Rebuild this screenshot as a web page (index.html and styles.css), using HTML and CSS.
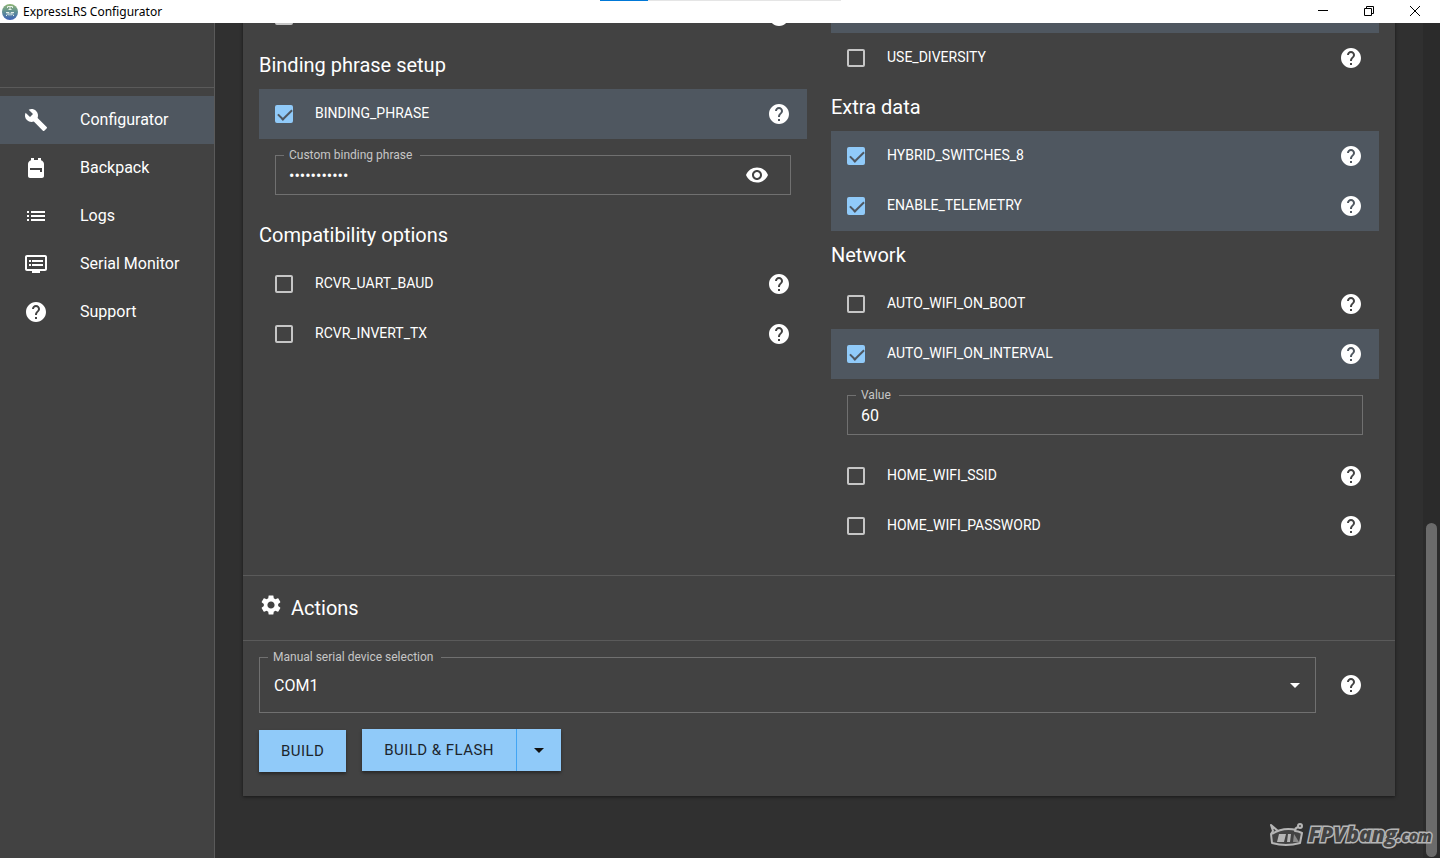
FILE: index.html
```html
<!DOCTYPE html>
<html lang="en">
<head>
  <meta charset="UTF-8" />
  <meta name="viewport" content="width=device-width, initial-scale=1.0"/>
  <title>ExpressLRS Configurator</title>
  <link rel="stylesheet" href="styles.css">
</head>
<body>
  <!-- shared icons -->
  <svg class="sprite" aria-hidden="true">
    <symbol id="help" viewBox="0 0 24 24"><path d="M12 2C6.480 2 2 6.480 2 12s4.480 10 10 10 10-4.480 10-10S17.520 2 12 2zm1 17h-2v-2h2v2zm2.070-7.750l-.9.920C13.450 12.900 13 13.500 13 15h-2v-.5c0-1.100.45-2.100 1.170-2.830l1.240-1.260c.37-.36.59-.86.59-1.410 0-1.100-.9-2-2-2s-2 .9-2 2H8c0-2.210 1.790-4 4-4s4 1.790 4 4c0 .88-.36 1.680-.93 2.250z"/></symbol>
    <symbol id="arrow" viewBox="0 0 24 24"><path d="M7 10l5 5 5-5z"/></symbol>
  </svg>

  <header class="titlebar">
    <svg class="app-icon" viewBox="0 0 16 16">
      <defs>
        <linearGradient id="logo" x1="0" y1="0" x2="0" y2="1">
          <stop offset="0" stop-color="#8fb573"/>
          <stop offset=".5" stop-color="#5f8f95"/>
          <stop offset="1" stop-color="#3f62b8"/>
        </linearGradient>
      </defs>
      <circle cx="8" cy="8" r="8" fill="url(#logo)"/>
      <path d="M5.500 4V2.500h5V4M8 2.500V5M6.500 5.500h3M4 8.500h3v3M4.500 10h2M4 11.500h1M12 8.500H9v3M11.500 10h-2M12 11.500h-1" fill="none" stroke="#e6efea" stroke-width="1"/>
    </svg>
    <span class="app-title">ExpressLRS Configurator</span>
    <div class="progress"></div>
    <div class="window-buttons">
      <button aria-label="Minimize"><svg viewBox="0 0 12 12"><path d="M1 5.500h10"/></svg></button>
      <button aria-label="Restore"><svg viewBox="0 0 12 12"><path d="M1.500 3.500h7v7h-7zM3.500 3.500v-2h7v7h-2"/></svg></button>
      <button aria-label="Close"><svg viewBox="0 0 12 12"><path d="M1 1l10 10M11 1L1 11"/></svg></button>
    </div>
  </header>

  <div class="app">
    <nav class="sidebar">
      <div class="sidebar-top"></div>
      <ul>
        <li><a class="active" href="#configurator">
          <svg viewBox="0 0 24 24"><path d="M22.700 19l-9.100-9.100c.9-2.300.4-5-1.500-6.900-2-2-5-2.400-7.400-1.300L9 6 6 9 1.600 4.700C.4 7.100.9 10.100 2.900 12.100c1.900 1.900 4.600 2.400 6.900 1.500l9.100 9.100c.4.4 1 .4 1.400 0l2.300-2.300c.5-.4.5-1.100.1-1.400z"/></svg>
          Configurator</a></li>
        <li><a href="#backpack">
          <svg viewBox="0 0 24 24"><path d="M20 8v12c0 1.100-.9 2-2 2H6c-1.100 0-2-.9-2-2V8c0-1.860 1.280-3.410 3-3.860V2h3v2h4V2h3v2.140c1.720.45 3 2 3 3.860zM6 12v2h10v2h2v-4H6z"/></svg>
          Backpack</a></li>
        <li><a href="#logs">
          <svg viewBox="0 0 24 24"><path d="M3 13h2v-2H3v2zm0 4h2v-2H3v2zm0-8h2V7H3v2zm4 4h14v-2H7v2zm0 4h14v-2H7v2zM7 7v2h14V7H7z"/></svg>
          Logs</a></li>
        <li><a href="#serial">
          <svg viewBox="0 0 24 24"><path d="M21 3H3c-1.100 0-2 .9-2 2v12c0 1.100.9 2 2 2h5v2h8v-2h5c1.100 0 1.990-.9 1.990-2L23 5c0-1.100-.9-2-2-2zm0 14H3V5h18v12zm-2-9H8v2h11V8zm0 4H8v2h11v-2zM7 8H5v2h2V8zm0 4H5v2h2v-2z"/></svg>
          Serial Monitor</a></li>
        <li><a href="#support">
          <svg><use href="#help"/></svg>
          Support</a></li>
      </ul>
    </nav>

    <main class="content">
      <div class="card">
        <div class="options">
          <section class="column column-left">
            <div class="option">
              <input type="checkbox" aria-label="Regulatory domain">
              <button class="help" aria-label="Help"><svg><use href="#help"/></svg></button>
            </div>
            <h2>Binding phrase setup</h2>
            <div class="option selected">
              <input type="checkbox" id="binding" checked>
              <label for="binding">BINDING_PHRASE</label>
              <button class="help" aria-label="Help"><svg><use href="#help"/></svg></button>
            </div>
            <div class="field">
              <label for="phrase">Custom binding phrase</label>
              <input type="password" id="phrase" value="expresslrs1">
              <button class="eye" aria-label="Show phrase"><svg viewBox="0 0 24 24"><path d="M12 4.500C7 4.500 2.730 7.610 1 12c1.730 4.390 6 7.500 11 7.500s9.270-3.110 11-7.500c-1.730-4.390-6-7.500-11-7.500zM12 17c-2.760 0-5-2.240-5-5s2.240-5 5-5 5 2.240 5 5-2.240 5-5 5zm0-8c-1.660 0-3 1.340-3 3s1.340 3 3 3 3-1.340 3-3-1.340-3-3-3z"/></svg></button>
            </div>
            <h2>Compatibility options</h2>
            <div class="option">
              <input type="checkbox" id="baud">
              <label for="baud">RCVR_UART_BAUD</label>
              <button class="help" aria-label="Help"><svg><use href="#help"/></svg></button>
            </div>
            <div class="option">
              <input type="checkbox" id="invert">
              <label for="invert">RCVR_INVERT_TX</label>
              <button class="help" aria-label="Help"><svg><use href="#help"/></svg></button>
            </div>
          </section>

          <section class="column">
            <div class="option selected">
              <input type="checkbox" aria-label="Lock on first connection" checked>
              <button class="help" aria-label="Help"><svg><use href="#help"/></svg></button>
            </div>
            <div class="option">
              <input type="checkbox" id="diversity">
              <label for="diversity">USE_DIVERSITY</label>
              <button class="help" aria-label="Help"><svg><use href="#help"/></svg></button>
            </div>
            <h2>Extra data</h2>
            <div class="option selected">
              <input type="checkbox" id="hybrid" checked>
              <label for="hybrid">HYBRID_SWITCHES_8</label>
              <button class="help" aria-label="Help"><svg><use href="#help"/></svg></button>
            </div>
            <div class="option selected">
              <input type="checkbox" id="telemetry" checked>
              <label for="telemetry">ENABLE_TELEMETRY</label>
              <button class="help" aria-label="Help"><svg><use href="#help"/></svg></button>
            </div>
            <h2>Network</h2>
            <div class="option">
              <input type="checkbox" id="onboot">
              <label for="onboot">AUTO_WIFI_ON_BOOT</label>
              <button class="help" aria-label="Help"><svg><use href="#help"/></svg></button>
            </div>
            <div class="option selected">
              <input type="checkbox" id="oninterval" checked>
              <label for="oninterval">AUTO_WIFI_ON_INTERVAL</label>
              <button class="help" aria-label="Help"><svg><use href="#help"/></svg></button>
            </div>
            <div class="field">
              <label for="interval">Value</label>
              <input type="text" id="interval" value="60">
            </div>
            <div class="option">
              <input type="checkbox" id="ssid">
              <label for="ssid">HOME_WIFI_SSID</label>
              <button class="help" aria-label="Help"><svg><use href="#help"/></svg></button>
            </div>
            <div class="option">
              <input type="checkbox" id="password">
              <label for="password">HOME_WIFI_PASSWORD</label>
              <button class="help" aria-label="Help"><svg><use href="#help"/></svg></button>
            </div>
          </section>
        </div>

        <div class="card-title">
          <svg viewBox="0 0 24 24"><path d="M19.140 12.940c.04-.3.060-.61.060-.94 0-.32-.02-.64-.07-.94l2.030-1.580c.18-.14.23-.41.12-.61l-1.920-3.320c-.12-.22-.37-.29-.59-.22l-2.390.96c-.5-.38-1.030-.7-1.620-.94l-.36-2.540c-.04-.24-.24-.41-.48-.41h-3.840c-.24 0-.43.17-.47.41l-.36 2.540c-.59.24-1.130.57-1.620.94l-2.390-.96c-.22-.08-.47 0-.59.22L2.740 8.870c-.12.21-.08.47.12.61l2.030 1.580c-.05.3-.09.63-.09.94s.02.64.07.94l-2.030 1.580c-.18.14-.23.41-.12.61l1.920 3.320c.12.22.37.29.59.22l2.390-.96c.5.38 1.030.7 1.620.94l.36 2.540c.05.24.24.41.48.41h3.840c.24 0 .44-.17.47-.41l.36-2.540c.59-.24 1.130-.56 1.620-.94l2.390.96c.22.08.47 0 .59-.22l1.920-3.320c.12-.22.07-.47-.12-.61l-2.010-1.580zM12 15.600c-1.980 0-3.600-1.620-3.600-3.600s1.620-3.600 3.600-3.600 3.600 1.620 3.600 3.600-1.620 3.600-3.600 3.600z"/></svg>
          <h2>Actions</h2>
        </div>

        <div class="actions">
          <div class="device">
            <div class="select">
              <label for="port">Manual serial device selection</label>
              <select id="port"><option>COM1</option></select>
              <svg><use href="#arrow"/></svg>
            </div>
            <button class="help" aria-label="Help"><svg><use href="#help"/></svg></button>
          </div>
          <div class="buttons">
            <button class="btn">BUILD</button>
            <div class="btn-group">
              <button class="btn">BUILD &amp; FLASH</button>
              <button class="btn btn-arrow" aria-label="More actions"><svg><use href="#arrow"/></svg></button>
            </div>
          </div>
        </div>
      </div>
    </main>

    <div class="scrollbar"><div class="thumb"></div></div>
  </div>

  <div class="watermark">
    <svg viewBox="0 0 36 26">
      <g fill="#434343" stroke="#b5b5b5" stroke-width="2" stroke-linejoin="round">
        <path d="M9 9L2 3l2 6-2 3 1 9q14 4 28 0l2-10q-4-2-7-2 0-3 3-4"/>
        <circle cx="31" cy="4" r="2"/>
        <path d="M3 12Q14 5 27 8" fill="none"/>
      </g>
      <path d="M10 12h7l-2 8H8zM19 12h3l-1 8h-3z" fill="#b5b5b5"/>
      <path d="M24 20l1-8 5 8z" fill="#8a8a8a"/>
    </svg>
    <span class="brand">FPVbang<small>.com</small></span>
  </div>
</body>
</html>
```
FILE: styles.css
```css
* {
  box-sizing: border-box;
}
body {
  margin: 0;
  height: 100vh;
  display: flex;
  flex-direction: column;
  overflow: hidden;
  background: #303030;
  color: #fff;
  font-family: Roboto, sans-serif;
  font-size: 16px;
}
button {
  padding: 0;
  border: 0;
  background: none;
  color: inherit;
  font-family: inherit;
}
svg {
  display: block;
  width: 24px;
  height: 24px;
  fill: #fff;
}
h2 {
  margin: 0;
  font-size: 20px;
  font-weight: 400;
  line-height: 48px;
}
.sprite {
  display: none;
}

/* window title */
.titlebar {
  position: relative;
  display: flex;
  align-items: center;
  flex: none;
  height: 23px;
  padding: 0 2px;
  background: #fff;
  color: #000;
}
.app-icon {
  width: 16px;
  height: 16px;
  margin-right: 5px;
}
.app-title {
  font-family: "Noto Sans", sans-serif;
  font-size: 12px;
  line-height: 22px;
}
.progress {
  position: absolute;
  top: 0;
  left: 50%;
  width: 241px;
  height: 1px;
  margin-left: -120px;
  background: linear-gradient(to right, #0078d7 48px, #e5e5e5 48px);
}
.window-buttons {
  display: flex;
  margin-left: auto;
}
.window-buttons button {
  display: flex;
  justify-content: center;
  width: 46px;
  padding-bottom: 2px;
}
.window-buttons svg {
  width: 12px;
  height: 12px;
  fill: none;
  stroke: #000;
}

.app {
  display: flex;
  flex: 1;
  min-height: 0;
}

/* sidebar */
.sidebar {
  flex: none;
  width: 215px;
  background: #424242;
  border-right: 1px solid #5a5a5a;
}
.sidebar-top {
  height: 65px;
  border-bottom: 1px solid #5a5a5a;
}
.sidebar ul {
  margin: 0;
  padding: 8px 0;
  list-style: none;
}
.sidebar a {
  display: flex;
  align-items: center;
  gap: 32px;
  height: 48px;
  padding: 0 24px;
  color: #fff;
  line-height: 24px;
  text-decoration: none;
}
.sidebar a.active {
  background: #4f5760;
}

/* page, scrolled to its end */
.content {
  display: flex;
  flex-direction: column;
  justify-content: flex-end;
  flex: 1;
  min-width: 0;
  padding: 0 28px 62px;
  overflow: hidden;
}
.card {
  flex: none;
  background: #424242;
  box-shadow: 0 1px 3px rgba(0,0,0,0.5);
}
.options {
  display: grid;
  grid-template-columns: 1fr 1fr;
  gap: 24px;
  padding: 0 16px 24px;
}
.column-left {
  padding-top: 8px;
}
.option {
  display: flex;
  align-items: center;
  height: 50px;
  padding: 0 16px;
}
.option.selected {
  background: #4f5760;
}
.option label {
  margin-left: 22px;
  padding-bottom: 2px;
  font-size: 14px;
  line-height: 20px;
}
.option input {
  appearance: none;
  width: 18px;
  height: 18px;
  margin: 0;
  border: 2px solid #c6c6c6;
  border-radius: 2px;
}
.option input:checked {
  position: relative;
  border-color: #90caf9;
  background: #90caf9;
}
.option input:checked::after {
  content: "";
  position: absolute;
  top: -1px;
  left: 4px;
  width: 6px;
  height: 12px;
  border: solid #4f5760;
  border-width: 0 2px 2px 0;
  transform: rotate(45deg);
}
.help {
  flex: none;
  margin-left: auto;
}

.field {
  position: relative;
  display: flex;
  align-items: center;
  height: 40px;
  margin: 16px;
  padding: 0 21px 0 13px;
  border: 1px solid #707070;
}
.field label,
.select label {
  position: absolute;
  top: -8px;
  left: 8px;
  padding: 0 8px 0 5px;
  background: #424242;
  color: #c6c6c6;
  font-size: 12px;
  line-height: 14px;
}
.field input {
  flex: 1;
  min-width: 0;
  padding: 0;
  border: 0;
  outline: 0;
  background: none;
  color: #fff;
  font: 16px Roboto, sans-serif;
}

/* actions */
.card-title {
  display: flex;
  gap: 8px;
  height: 66px;
  padding: 8px 16px;
  border-top: 1px solid #5a5a5a;
  border-bottom: 1px solid #5a5a5a;
}
.card-title svg {
  margin-top: 9px;
}
.actions {
  padding: 16px 16px 24px;
}
.device {
  display: flex;
  align-items: center;
  gap: 23px;
  padding-right: 16px;
}
.select {
  position: relative;
  flex: 1;
  height: 56px;
  border: 1px solid #707070;
}
.select select {
  appearance: none;
  width: 100%;
  height: 100%;
  padding: 0 14px;
  border: 0;
  background: none;
  color: #fff;
  font: 16px Roboto, sans-serif;
}
.select svg {
  position: absolute;
  top: 15px;
  right: 8px;
  pointer-events: none;
}
.buttons {
  display: flex;
  align-items: flex-end;
  gap: 16px;
  margin-top: 16px;
}
.btn {
  height: 42px;
  padding: 0 22px;
  background: #90caf9;
  color: #1c252d;
  font-size: 15px;
  font-weight: 400;
  letter-spacing: 0.03em;
}
.buttons > .btn,
.btn-group {
  box-shadow: 0 2px 3px rgba(0,0,0,0.4);
}
.btn-group {
  display: flex;
  margin-bottom: 1px;
}
.btn-arrow {
  padding: 0 10px;
  border-left: 1px solid #42a5f5;
}
.btn-arrow svg {
  fill: #111;
}

.scrollbar {
  display: flex;
  flex-direction: column;
  justify-content: flex-end;
  flex: none;
  width: 17px;
  padding: 0 3px 1px;
  background: #2b2b2b;
}
.thumb {
  height: 40%;
  border-radius: 6px;
  background: #6b6b6b;
}

.watermark {
  position: absolute;
  right: 8px;
  bottom: 8px;
  display: flex;
  align-items: center;
  gap: 3px;
}
.watermark svg {
  width: 36px;
  height: 26px;
}
.brand {
  color: #434343;
  font: italic 800 21px/28px "Open Sans", sans-serif;
  -webkit-text-stroke: 3px #b5b5b5;
  paint-order: stroke fill;
}
.brand small {
  font-size: 15px;
}
```
